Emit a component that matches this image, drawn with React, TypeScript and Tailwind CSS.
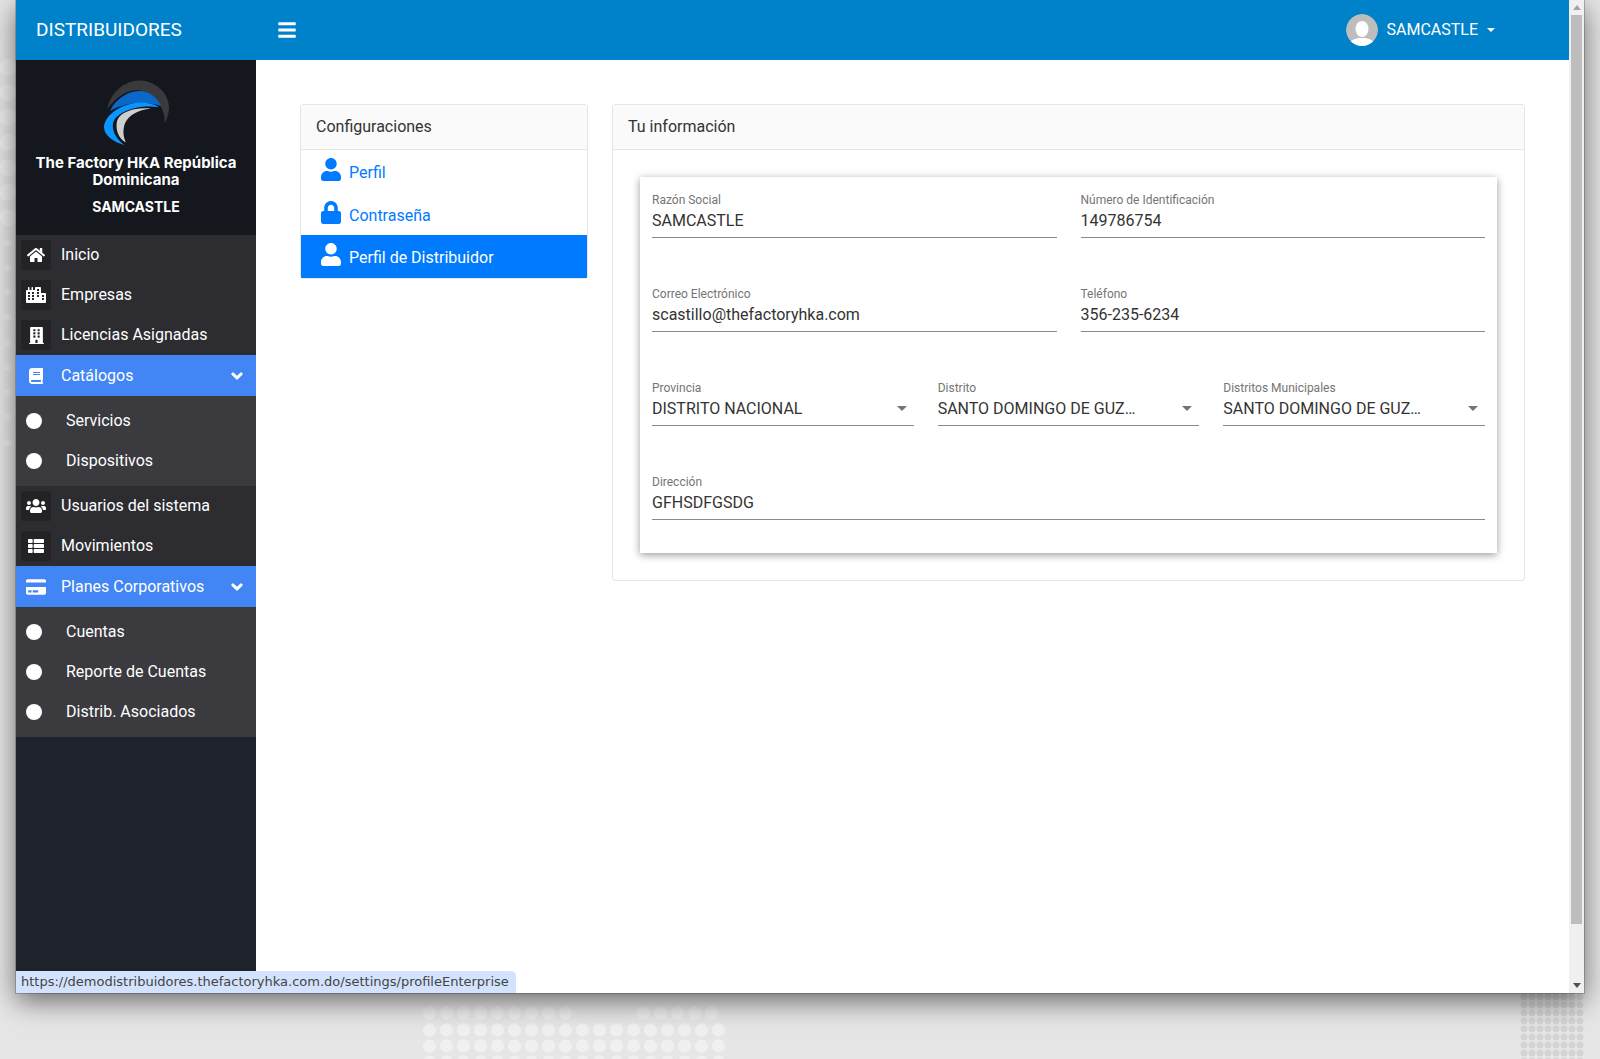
import type { ReactNode } from 'react'
import {
  FaBars,
  FaBook,
  FaBuilding,
  FaChevronDown,
  FaCity,
  FaCreditCard,
  FaHome,
  FaLock,
  FaThList,
  FaUser,
  FaUsers,
} from 'react-icons/fa'

function NavItem({ icon, label }: { icon: ReactNode; label: string }) {
  return (
    <div className="flex h-10 items-center">
      <span className="ml-[5px] flex h-[30px] w-[30px] items-center justify-center rounded-[3px] bg-[#232326] text-white">
        {icon}
      </span>
      <span className="ml-[10px] text-[16px] text-white">{label}</span>
    </div>
  )
}

function NavGroup({ icon, label }: { icon: ReactNode; label: string }) {
  return (
    <div className="flex h-[41px] items-center bg-[#4285f4] text-white">
      <span className="ml-[5px] flex h-[30px] w-[30px] items-center justify-center">{icon}</span>
      <span className="ml-[10px] flex-1 text-[16px]">{label}</span>
      <FaChevronDown className="mr-[13px] h-3 w-3" stroke="currentColor" strokeWidth={50} />
    </div>
  )
}

function SubItem({ label }: { label: string }) {
  return (
    <div className="flex h-10 items-center">
      <span className="ml-[10px] h-4 w-4 rounded-full bg-white" />
      <span className="ml-[24px] text-[16px] text-white">{label}</span>
    </div>
  )
}

function SettingsLink({ icon, label, className }: { icon: ReactNode; label: string; className: string }) {
  return (
    <div className={className}>
      <span className="ml-[20px] flex w-5 justify-center pb-[5px] text-[23px]">{icon}</span>
      <span className="ml-2 pt-[1px] text-[16px]">{label}</span>
    </div>
  )
}

function Field({ label, value, select, className }: { label: string; value: string; select?: boolean; className?: string }) {
  return (
    <div className={className}>
      <div className="h-[14px] text-[12px] leading-[14px] text-[#757575]">{label}</div>
      <div className="flex h-[31px] items-center justify-between border-b border-[#8a8a8a] pt-[2px] pb-[5px] text-[16px] text-[#333]">
        <span>{value}</span>
        {select && <span className="mr-[7px] h-0 w-0 border-x-[5px] border-t-[5px] border-x-transparent border-t-[#757575]" />}
      </div>
    </div>
  )
}

function Logo() {
  return (
    <svg viewBox="30 20 220 210" className="h-[70px] w-[73px]">
      <path fill="#3a3a3c" d="M52 115C62 65 105 30 150 30C205 32 240 75 238 115C237 130 232 145 225 158C226 125 210 85 170 65C130 48 85 70 52 115Z" />
      <path fill="#0a68c8" d="M60 122C75 90 110 62 150 62C180 62 205 85 215 108C170 90 110 95 60 122Z" />
      <path fill="#0a96ff" d="M105 225C70 215 42 195 42 170C45 130 100 98 150 96C175 96 195 102 208 110C170 105 115 108 80 140C55 165 75 205 105 225Z" />
      <path fill="#cfcfcf" d="M108 217C85 205 75 175 82 150C95 120 145 110 183 115C145 118 115 135 105 160C98 180 100 200 108 217Z" />
    </svg>
  )
}

export default function App() {
  return (
    <div className="relative h-[1059px] w-[1600px] overflow-hidden bg-[#e6e6e6] font-['Roboto',sans-serif]">
      {/* speckled wallpaper behind the window */}
      <div className="absolute left-0 top-[55px] h-[175px] w-[16px] bg-[radial-gradient(circle,#eeeeee_8px,transparent_9px)] bg-[length:16px_25px]" />
      <div className="absolute left-0 top-[230px] h-[225px] w-[16px] bg-[radial-gradient(circle,#eeeeee_3px,transparent_4px)] bg-[length:16px_25px]" />
      <div className="absolute left-[421px] top-[1005px] h-[17px] w-[153px] bg-[radial-gradient(circle,#eeeeee_6px,transparent_7px)] bg-[length:17px_16px]" />
      <div className="absolute left-[635px] top-[1005px] h-[17px] w-[85px] bg-[radial-gradient(circle,#eeeeee_6px,transparent_7px)] bg-[length:17px_16px]" />
      <div className="absolute left-[421px] top-[1022px] h-[37px] w-[306px] bg-[radial-gradient(circle,#f0f0f0_6px,transparent_7px)] bg-[length:17px_16px]" />
      <div className="absolute left-[1520px] top-[993px] h-[66px] w-[64px] bg-[radial-gradient(circle,#d4d4d4_3px,transparent_4px)] bg-[length:8px_8px]" />

      <div className="relative ml-4 flex h-[993px] w-[1568px] bg-white shadow-[0_0_0_1px_rgba(0,0,0,0.2),0_8px_26px_rgba(0,0,0,0.55)]">
        <div className="flex w-[1553px] flex-col">
          {/* Top bar */}
          <header className="flex h-[60px] shrink-0 items-center bg-[#0082ca] text-white">
            <div className="w-[240px] pl-5 pt-[1px] text-[19px]">DISTRIBUIDORES</div>
            <FaBars className="ml-[21px] h-5 w-5" />
            <div className="ml-auto mr-[74px] flex items-center">
              <svg viewBox="0 0 32 32" className="h-8 w-8 rounded-full">
                <circle cx="16" cy="16" r="16" fill="#bdbdbd" />
                <ellipse cx="16" cy="15" rx="6.5" ry="8" fill="#fff" />
                <path fill="#fff" d="M3 32c1-7 7-8 13-8s12 1 13 8z" />
              </svg>
              <span className="ml-2 text-[16px]">SAMCASTLE</span>
              <span className="ml-[9px] h-0 w-0 border-x-[4px] border-t-[4px] border-x-transparent border-t-white" />
            </div>
          </header>

          <div className="flex min-h-0 flex-1">
            {/* Sidebar */}
            <aside className="flex w-[240px] shrink-0 flex-col bg-[#1e222b]">
              <div className="flex h-[175px] flex-col items-center bg-[#14171e] pt-[17px] font-['Inter',sans-serif] text-[15px] font-bold leading-[17px] text-white">
                <Logo />
                <div className="mt-[7px] text-center">
                  The Factory HKA República
                  <br />
                  Dominicana
                </div>
                <div className="mt-[10px] text-[14px]">SAMCASTLE</div>
              </div>
              <nav>
                <div className="bg-[#2c2c31]">
                  <NavItem icon={<FaHome className="h-[18px] w-[18px]" />} label="Inicio" />
                  <NavItem icon={<FaCity className="h-[18px] w-[20px]" />} label="Empresas" />
                  <NavItem icon={<FaBuilding className="h-[17px] w-[15px]" />} label="Licencias Asignadas" />
                </div>
                <NavGroup icon={<FaBook className="h-4 w-4" />} label="Catálogos" />
                <div className="bg-[#3a3a3f] py-[5px]">
                  <SubItem label="Servicios" />
                  <SubItem label="Dispositivos" />
                </div>
                <div className="bg-[#2c2c31]">
                  <NavItem icon={<FaUsers className="h-[18px] w-[20px]" />} label="Usuarios del sistema" />
                  <NavItem icon={<FaThList className="h-4 w-[18px]" />} label="Movimientos" />
                </div>
                <NavGroup icon={<FaCreditCard className="h-[18px] w-5" />} label="Planes Corporativos" />
                <div className="bg-[#3a3a3f] py-[5px]">
                  <SubItem label="Cuentas" />
                  <SubItem label="Reporte de Cuentas" />
                  <SubItem label="Distrib. Asociados" />
                </div>
              </nav>
            </aside>

            {/* Content */}
            <main className="flex flex-1 items-start gap-6 px-11 pt-[44px]">
              <section className="w-[288px] shrink-0 rounded-[3px] border border-[#e6e6e6]">
                <div className="flex h-[45px] items-center border-b border-[#e6e6e6] bg-[#fafafa] pl-[15px] text-[16px] text-[#333]">
                  Configuraciones
                </div>
                <SettingsLink className="flex h-[43px] items-center pt-[1px] text-[#007bff]" icon={<FaUser />} label="Perfil" />
                <SettingsLink className="flex h-[42px] items-center pt-[2px] text-[#007bff]" icon={<FaLock />} label="Contraseña" />
                <SettingsLink className="flex h-[43px] items-center bg-[#007bff] pt-[1px] text-white" icon={<FaUser />} label="Perfil de Distribuidor" />
              </section>

              <section className="flex-1 rounded-[3px] border border-[#e6e6e6] pb-[27px]">
                <div className="flex h-[45px] items-center border-b border-[#e6e6e6] bg-[#fafafa] pl-[15px] text-[16px] text-[#333]">
                  Tu información
                </div>
                <div className="mx-[27px] mt-[27px] h-[376px] bg-white px-3 pt-4 shadow-[0_2px_8px_rgba(0,0,0,0.4)]">
                  <div className="grid grid-cols-6 gap-x-6 gap-y-[49px]">
                    <Field className="col-span-3" label="Razón Social" value="SAMCASTLE" />
                    <Field className="col-span-3" label="Número de Identificación" value="149786754" />
                    <Field className="col-span-3" label="Correo Electrónico" value="scastillo@thefactoryhka.com" />
                    <Field className="col-span-3" label="Teléfono" value="356-235-6234" />
                    <Field className="col-span-2" select label="Provincia" value="DISTRITO NACIONAL" />
                    <Field className="col-span-2" select label="Distrito" value="SANTO DOMINGO DE GUZ…" />
                    <Field className="col-span-2" select label="Distritos Municipales" value="SANTO DOMINGO DE GUZ…" />
                    <Field className="col-span-6" label="Dirección" value="GFHSDFGSDG" />
                  </div>
                </div>
              </section>
            </main>
          </div>
        </div>

        {/* Window scrollbar */}
        <div className="flex w-[15px] flex-col items-center bg-[#f0f0f0]">
          <span className="mt-[5px] h-0 w-0 border-x-[4px] border-b-[5px] border-x-transparent border-b-[#a3a3a3]" />
          <div className="mt-[5px] h-[909px] w-[11px] bg-[#bdbdbd]" />
          <span className="mt-auto mb-[5px] h-0 w-0 border-x-[4px] border-t-[5px] border-x-transparent border-t-[#505050]" />
        </div>

        {/* Link preview bubble */}
        <div className="absolute bottom-0 left-0 flex h-[22px] w-[500px] items-center rounded-tr-[5px] bg-[#d3e3fd] pl-[5px] font-['DejaVu_Sans',sans-serif] text-[13px] text-[#444]">
          https://demodistribuidores.thefactoryhka.com.do/settings/profileEnterprise
        </div>
      </div>
    </div>
  )
}
